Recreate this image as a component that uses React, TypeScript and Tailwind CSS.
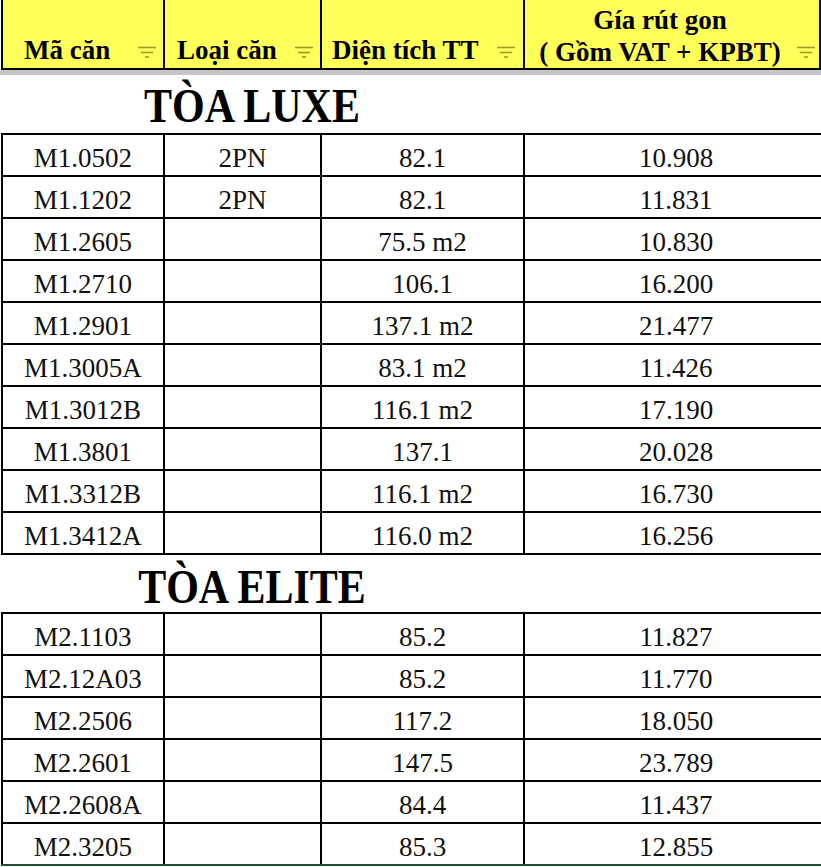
import React from 'react';

interface Row {
  code: string;
  type: string;
  area: string;
  price: string;
}

const luxe: Row[] = [
  { code: 'M1.0502', type: '2PN', area: '82.1', price: '10.908' },
  { code: 'M1.1202', type: '2PN', area: '82.1', price: '11.831' },
  { code: 'M1.2605', type: '', area: '75.5 m2', price: '10.830' },
  { code: 'M1.2710', type: '', area: '106.1', price: '16.200' },
  { code: 'M1.2901', type: '', area: '137.1 m2', price: '21.477' },
  { code: 'M1.3005A', type: '', area: '83.1 m2', price: '11.426' },
  { code: 'M1.3012B', type: '', area: '116.1 m2', price: '17.190' },
  { code: 'M1.3801', type: '', area: '137.1', price: '20.028' },
  { code: 'M1.3312B', type: '', area: '116.1 m2', price: '16.730' },
  { code: 'M1.3412A', type: '', area: '116.0 m2', price: '16.256' },
];

const elite: Row[] = [
  { code: 'M2.1103', type: '', area: '85.2', price: '11.827' },
  { code: 'M2.12A03', type: '', area: '85.2', price: '11.770' },
  { code: 'M2.2506', type: '', area: '117.2', price: '18.050' },
  { code: 'M2.2601', type: '', area: '147.5', price: '23.789' },
  { code: 'M2.2608A', type: '', area: '84.4', price: '11.437' },
  { code: 'M2.3205', type: '', area: '85.3', price: '12.855' },
];

// excel filter dropdown glyph
const FilterIcon = ({ className }: { className: string }) => (
  <svg width="20" height="14" viewBox="0 0 20 14" className={`absolute top-[46px] ${className}`}>
    <line x1="1" y1="1.5" x2="19" y2="1.5" stroke="#9c9c2c" strokeWidth="1.6" />
    <line x1="4" y1="6.5" x2="16" y2="6.5" stroke="#9c9c2c" strokeWidth="1.6" />
    <line x1="8" y1="11" x2="12" y2="11" stroke="#9c9c2c" strokeWidth="1.6" />
  </svg>
);

const cell = 'flex items-center justify-center border-l-2 border-black pt-[5px]';

const DataRow = ({ row, last }: { row: Row; last?: boolean }) => (
  <div
    className={`grid grid-cols-[162px_157px_203px_1fr] h-[42px] border-b-2 ${
      last ? 'border-[#24502f]' : 'border-black'
    }`}
  >
    <div className={cell}>{row.code}</div>
    <div className={cell}>{row.type}</div>
    <div className={cell}>{row.area}</div>
    <div className={`${cell} pl-[6px]`}>{row.price}</div>
  </div>
);

const App: React.FC = () => {
  return (
    <div
      className="w-[821px] h-[867px] overflow-hidden bg-white text-[#111]"
      style={{ fontFamily: '"Liberation Serif", "Times New Roman", serif' }}
    >
      {/* header */}
      <div className="grid grid-cols-[162px_157px_203px_1fr] h-[70px] ml-[1px] bg-[#ffff5a] border-b-2 border-black text-[27px] font-bold leading-[32px] text-black">
        <div className="relative flex items-end border-l-2 border-black pl-[21px] pb-[2px]">
          Mã căn
          <FilterIcon className="right-[6px]" />
        </div>
        <div className="relative flex items-end border-l-2 border-black pl-[12px] pb-[2px]">
          Loại căn
          <FilterIcon className="right-[6px]" />
        </div>
        <div className="relative flex items-end border-l-2 border-black pl-[10px] pb-[2px]">
          Diện tích TT
          <FilterIcon className="right-[7px]" />
        </div>
        <div className="relative flex flex-col items-center border-l-2 border-r-2 border-black pr-[24px] pt-[4px]">
          <span>Gía rút gon</span>
          <span>( Gồm VAT + KPBT)</span>
          <FilterIcon className="right-[3px]" />
        </div>
      </div>
      <div className="h-[5px] bg-[#c6c6c6]" />

      {/* TÒA LUXE */}
      <div className="h-[58px] w-[504px] flex justify-center pt-[10px]">
        <span className="inline-block text-[42px] font-bold leading-[42px] text-black scale-y-[1.15]">
          TÒA LUXE
        </span>
      </div>
      <div className="ml-[1px] border-t-2 border-black text-[27px] leading-[30px]">
        {luxe.map((r) => (
          <DataRow key={r.code} row={r} />
        ))}
      </div>

      {/* TÒA ELITE */}
      <div className="h-[57px] w-[504px] flex justify-center pt-[11px]">
        <span className="inline-block text-[42px] font-bold leading-[42px] text-black scale-y-[1.15]">
          TÒA ELITE
        </span>
      </div>
      <div className="ml-[1px] border-t-2 border-black text-[27px] leading-[30px]">
        {elite.map((r, i) => (
          <DataRow key={r.code} row={r} last={i === elite.length - 1} />
        ))}
      </div>
    </div>
  );
};

export default App;
